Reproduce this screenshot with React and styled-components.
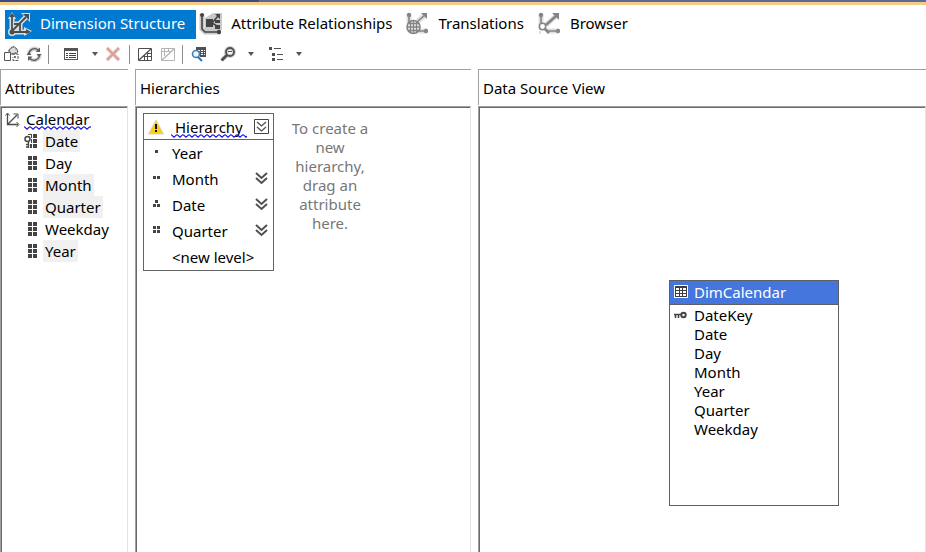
import React from "react";
import styled, { createGlobalStyle, css } from "styled-components";

const GlobalStyle = createGlobalStyle`
  *, *::before, *::after { box-sizing: border-box; }
  body {
    margin: 0;
    background: #fff;
    color: #000;
    font: 15px/20px "Noto Sans", "Open Sans", sans-serif;
  }
  button {
    margin: 0;
    padding: 0;
    border: 0;
    background: none;
    color: inherit;
    font: inherit;
  }
  ul { margin: 0; padding: 0; list-style: none; }
  svg { display: block; flex: none; }
`;

const Designer = styled.div`
  display: flex;
  flex-direction: column;
  min-height: 100vh;
`;

const TopEdge = styled.div`
  height: 5px;
  border-bottom: 3px solid #f5cc84;
  background: linear-gradient(to right, #3d4b85 28%, #5b6a98 28%);
`;

const Tabs = styled.nav`
  display: flex;
  padding: 5px 5px 3px;
`;

const Tab = styled.button`
  display: flex;
  align-items: center;
  gap: 8px;
  height: 29px;
  padding: 0 11px 3px 2px;
  color: ${(p) => (p.$active ? "#fff" : "#000")};
  background: ${(p) => (p.$active ? "#0079d0" : "transparent")};
`;

const Toolbar = styled.div`
  display: flex;
  align-items: center;
  height: 27px;
  padding: 0 1px 3px;
`;

const Tool = styled.button`
  display: flex;
  align-items: center;
  justify-content: center;
  width: ${(p) => p.$width}px;
  height: 22px;
`;

const Separator = styled.span`
  width: 1px;
  height: 19px;
  margin: 0 3px;
  background: #8c8c8c;
`;

const Panes = styled.main`
  flex: 1;
  display: grid;
  grid-template-columns: 128px 336px minmax(0, 1fr);
  gap: 7px;
`;

const Pane = styled.section`
  display: flex;
  flex-direction: column;
  gap: 1px;
  min-width: 0;
`;

const PaneTitle = styled.h2`
  margin: 0;
  height: 36px;
  padding: 8px 4px;
  border: solid #a0a0a0;
  border-width: 1px 0 0 1px;
  font-size: 15px;
  font-weight: 400;
`;

const PaneBody = styled.div`
  flex: 1;
  position: relative;
  display: flex;
  align-items: flex-start;
  border-top: 1px solid #a0a0a0;
  border-left: 1px solid #a0a0a0;
  border-right: 1px solid #e3e3e3;
  box-shadow: inset 1px 1px #696969;
`;

const Tree = styled.ul`
  padding: 1px 0 0 1px;
`;

const TreeRow = styled.li`
  display: flex;
  align-items: center;
  gap: ${(p) => (p.$root ? 3 : 3)}px;
  height: 22px;
  padding-left: ${(p) => (p.$root ? 3 : 22)}px;
`;

const Label = styled.span`
  position: relative;
  height: 22px;
  padding: 1px 2px 0;
  ${(p) => p.$used && css`background: #f0f0f0;`}
`;

const SquiggleSvg = styled.svg`
  position: absolute;
  left: 0;
  bottom: 0;
  width: 100%;
  height: 4px;
`;

const HierarchyBox = styled.article`
  width: 131px;
  margin: 6px 0 0 7px;
  border: 1px solid #646464;
`;

const HierarchyHead = styled.header`
  display: flex;
  align-items: center;
  gap: 7px;
  height: 26px;
  padding: 0 4px;
  border-bottom: 1px solid #646464;
`;

const HierarchyName = styled.span`
  position: relative;
  flex: 1;
  height: 22px;
  padding: 1px 3px 0 4px;
`;

const Level = styled.li`
  display: flex;
  align-items: center;
  height: 26px;
  padding: 0 4px 1px 8px;
`;

const LevelName = styled.span`
  flex: 1;
  padding-left: 11px;
`;

const Hint = styled.p`
  width: 84px;
  margin: 12px 0 0 14px;
  color: #777;
  line-height: 19px;
  text-align: center;
`;

const TableNode = styled.article`
  position: absolute;
  left: 190px;
  top: 173px;
  width: 170px;
  min-height: 226px;
  border: 1px solid #5f5f5f;
  background: #fff;
`;

const TableHead = styled.header`
  display: flex;
  align-items: center;
  gap: 5px;
  height: 24px;
  padding: 0 4px 1px 3px;
  border-bottom: 1px solid #5f5f5f;
  background: #4476dd;
  color: #fff;
`;

const Column = styled.li`
  display: flex;
  align-items: center;
  height: 19px;
  padding-left: 4px;
`;

const KeySlot = styled.span`
  width: 20px;
`;

function Squiggle({ id }) {
  return (
    <SquiggleSvg aria-hidden="true">
      <defs>
        <pattern id={id} width="6" height="4" patternUnits="userSpaceOnUse">
          <path d="M-1 -.5 L0 .5 L3 3.2 L6 .5 L7 -.5" fill="none" stroke="#1414e6" strokeWidth="1.1" />
        </pattern>
      </defs>
      <rect width="100%" height="4" fill={`url(#${id})`} />
    </SquiggleSvg>
  );
}

const tabPalettes = {
  structure: { ink: "#4c4c4c", halo: "#d9dde0" },
  relationships: { ink: "#444", halo: "#c9c9c9" },
  translations: { ink: "#858585", halo: "#dedede" },
  browser: { ink: "#858585", halo: "#dedede" },
};

function StructureShape({ ink, halo }) {
  const lines = "M5 5V17L5 21H20M6 19L19 6M7 13H13V20";
  return (
    <>
      <path d={lines} stroke={halo} strokeWidth="5" />
      <path d="M1 8L5 1L9 8ZM14 2H23V11ZM17 16L25 20L17 25Z" fill={halo} />
      <circle cx="5" cy="21" r="4" fill={halo} />
      <path d={lines} stroke={ink} strokeWidth="1.8" />
      <path d="M2 6L5 2L8 6ZM16 3H22V9ZM19 18L24 21L19 23Z" fill={ink} />
      <circle cx="5" cy="21" r="2.500" fill={ink} />
    </>
  );
}

function RelationshipsShape({ ink, halo }) {
  return (
    <>
      <path d="M4 3V18L7 21H22M8 12H22" stroke={halo} strokeWidth="5" />
      <path d="M7 7L15 2H24V19H7Z" fill={halo} />
      <path d="M4 4V18L7 21H21M14 12L20 5M14 12L19 15" stroke={ink} strokeWidth="1.600" />
      <path d="M8 8H15V16H8ZM17 9H22V12H17ZM17 14H22V18H17ZM17 3H22V8Z" fill={ink} />
      <circle cx="4" cy="4" r="2" fill={ink} />
      <circle cx="21" cy="21" r="2.200" fill={ink} />
    </>
  );
}

function TranslationsShape({ ink, halo }) {
  return (
    <>
      <path d="M4 3V12M13 10L20 4M14 20H22" stroke={halo} strokeWidth="5" />
      <path d="M4 4V11M12 11L20 4M14 20H21" stroke={ink} strokeWidth="1.600" />
      <path d="M16 2H22V8Z" fill={ink} />
      <circle cx="4" cy="4" r="2.200" fill={ink} />
      <circle cx="21" cy="20" r="2.200" fill={ink} />
      <circle cx="8.500" cy="16" r="6.500" fill="#ececec" stroke={ink} strokeWidth="1.600" />
      <path d="M2 16H15M3 12.500H14M3 19.500H14M8.500 9V23M5.500 10V22M11.500 10V22" stroke={ink} strokeWidth="1.300" />
    </>
  );
}

function BrowserShape({ ink, halo }) {
  return (
    <>
      <path d="M4 3V14M9 14L20 4M10 20H22" stroke={halo} strokeWidth="5" />
      <path d="M4 4V12M11 20H21" stroke={ink} strokeWidth="1.600" />
      <path d="M9 14L19 5" stroke={ink} strokeWidth="2.400" />
      <path d="M15 2H22V9Z" fill={ink} />
      <circle cx="4" cy="4" r="2.200" fill={ink} />
      <circle cx="21" cy="20" r="2.200" fill={ink} />
      <circle cx="5.500" cy="15.500" r="3.200" fill="#fff" stroke={ink} strokeWidth="1.600" />
      <path d="M8 18L12 22" stroke={ink} strokeWidth="2.600" />
      <path d="M3 20V23" stroke={halo} strokeWidth="2" />
    </>
  );
}

const tabShapes = {
  structure: StructureShape,
  relationships: RelationshipsShape,
  translations: TranslationsShape,
  browser: BrowserShape,
};

function TabIcon({ kind }) {
  const Shape = tabShapes[kind];
  return (
    <svg width="25" height="25" viewBox="0 0 25 25" fill="none" aria-hidden="true">
      <Shape {...tabPalettes[kind]} />
    </svg>
  );
}

const Icon16 = ({ children }) => (
  <svg width="16" height="16" viewBox="0 0 16 16" fill="none" aria-hidden="true">
    {children}
  </svg>
);

const ProcessIcon = () => (
  <Icon16>
    <path d="M.5 6.500H6.500V14.500H.5Z" fill="#fff" stroke="#555" />
    <path d="M4 5L9 1L14 5L9 8Z" fill="#ddd" stroke="#777" strokeDasharray="2 1" />
    <path d="M7 1.500L10 .5L13 3L14 6L11 8H7L5 4Z" stroke="#666" />
    <path d="M8 8H14V14.500H9V11" stroke="#555" strokeDasharray="3 1" />
    <path d="M10 10H12V12H10Z" fill="#777" />
  </Icon16>
);

const RefreshIcon = () => (
  <Icon16>
    <path d="M3 9A5.500 5.500 0 0 1 12 4M13.500 8A5.500 5.500 0 0 1 4 12.500" stroke="#d2d2d2" strokeWidth="4" />
    <path d="M3 8A5.500 5.500 0 0 1 12 4M13.500 8.500A5.500 5.500 0 0 1 4 12.500" stroke="#5c5c5c" strokeWidth="1.300" />
    <path d="M9.500 6H14V1.500ZM6.500 10.500H2V15ZM.5 9L3 6L5.500 9ZM10.500 8H15.500L13 11Z" fill="#5c5c5c" />
  </Icon16>
);

const ListIcon = () => (
  <Icon16>
    <g shapeRendering="crispEdges">
      <path d="M1.500 2.500H14.500V13.500H1.500Z" stroke="#555" />
      <path d="M1 2H15V5H1Z" fill="#555" />
      <path d="M3 7H5V8H3ZM6 7H13V8H6ZM3 9H5V10H3ZM6 9H13V10H6ZM3 11H5V12H3ZM6 11H13V12H6Z" fill="#444" />
    </g>
  </Icon16>
);

const DeleteIcon = () => (
  <Icon16>
    <path d="M2 2L14 14M14 2L2 14" stroke="#e3dad8" strokeWidth="4" />
    <path d="M2 2L14 14M14 2L2 14" stroke="#df9d94" strokeWidth="2.200" />
  </Icon16>
);

const GridIcon = ({ faded }) => {
  const ink = faded ? "#b4b4b4" : "#4f4f4f";
  return (
    <Icon16>
      <path d="M1.500 2.500H14.500V14.500H1.500Z" stroke={ink} />
      <path d="M2 14L14 3" stroke={ink} strokeWidth="1.300" />
      {faded ? (
        <path d="M4.500 3V10M2 5.500H11M8.500 3V6" stroke={ink} />
      ) : (
        <path d="M10.500 6V14M6 10.500H14M7.500 9V14M10 7.500H14" stroke={ink} />
      )}
    </Icon16>
  );
};

const FindTableIcon = () => (
  <Icon16>
    <path d="M5 1H15V11H9V6H5Z" fill="#505050" />
    <path d="M7 4.500H9M10 4.500H12M13 4.500H14M10 6.500H12M13 6.500H14M10 8.500H12M13 8.500H14" stroke="#fff" />
    <circle cx="5" cy="8" r="3.500" fill="#eef5fb" stroke="#3f7fb8" strokeWidth="1.600" />
    <path d="M7 11L11 15" stroke="#2f73b0" strokeWidth="2" />
  </Icon16>
);

const ZoomIcon = () => (
  <Icon16>
    <path d="M2 14L7 9" stroke="#d0d0d0" strokeWidth="4" />
    <circle cx="10" cy="6" r="4" fill="#fff" stroke="#d0d0d0" strokeWidth="4" />
    <path d="M1.500 14.500L7 9" stroke="#505050" strokeWidth="2.600" />
    <circle cx="10" cy="6" r="4" stroke="#505050" strokeWidth="1.800" />
    <path d="M8 5.500H12" stroke="#505050" />
  </Icon16>
);

const OutlineIcon = () => (
  <Icon16>
    <path
      d="M1 1H4V4H1ZM6 2H13V3H6ZM4 7H7V10H4ZM9 8H15V9H9ZM4 12H7V15H4ZM9 13H15V14H9Z"
      fill="#4f4f4f"
      shapeRendering="crispEdges"
    />
  </Icon16>
);

const Caret = () => (
  <svg width="6" height="4" viewBox="0 0 6 4" aria-hidden="true">
    <path d="M0 0H6L3 4Z" fill="#555" />
  </svg>
);

const DimensionIcon = () => (
  <Icon16>
    <path d="M2.500 3V13.500H13M3 13L12 4" stroke="#4a4a4a" strokeWidth="1.300" />
    <path d="M.5 4.500L2.500 2L4.500 4.500M8.500 3H13V7.500M11.500 11L14 13.500L11.500 16" stroke="#4a4a4a" />
  </Icon16>
);

const AttributeIcon = ({ keyed }) => (
  <svg width="16" height="14" viewBox="0 0 16 14" aria-hidden="true">
    <path
      d="M4 0H8V4H4ZM9 0H13V4H9ZM4 5H8V9H4ZM9 5H13V9H9ZM4 10H8V14H4ZM9 10H13V14H9Z"
      fill="#444"
      shapeRendering="crispEdges"
    />
    {keyed && (
      <g>
        <path d="M0 1H7V9H6V14H0Z" fill="#fff" />
        <circle cx="3.500" cy="5" r="2.500" fill="#fff" stroke="#444" strokeWidth="1.500" />
        <path d="M4.500 8V14M2 10.500H4M2 13H4" stroke="#444" strokeWidth="1.300" />
      </g>
    )}
  </svg>
);

const WarningIcon = () => (
  <svg width="16" height="16" viewBox="0 0 16 16" aria-hidden="true">
    <path d="M8 1L15.500 15H.5Z" fill="#ffcd12" stroke="#d9d3bd" strokeLinejoin="round" />
    <path d="M7 5H9V10H7ZM7 11H9V13H7Z" fill="#111" />
  </svg>
);

const Chevrons = ({ framed }) => (
  <svg width="15" height="15" viewBox="0 0 15 15" fill="none" aria-hidden="true">
    {framed && <path d="M.5 .5H14.500V14.500H.5Z" stroke="#444" />}
    <path
      d={framed ? "M3 3L7.500 7L12 3M3 8L7.500 12L12 8" : "M2 2L7.500 7L13 2M2 7L7.500 12L13 7"}
      stroke="#505050"
      strokeWidth={framed ? 1.3 : 2}
    />
  </svg>
);

const DOTS = {
  1: "M3 2H6V5H3Z",
  2: "M1 2H4V5H1ZM5 2H8V5H5Z",
  3: "M3 0H6V3H3ZM1 4H4V7H1ZM5 4H8V7H5Z",
  4: "M1 0H4V3H1ZM5 0H8V3H5ZM1 4H4V7H1ZM5 4H8V7H5Z",
};

const LevelDots = ({ count }) => (
  <svg width="9" height="9" viewBox="0 0 9 9" aria-hidden="true">
    {DOTS[count] && <path d={DOTS[count]} fill="#444" shapeRendering="crispEdges" />}
  </svg>
);

const TableIcon = () => (
  <Icon16>
    <g shapeRendering="crispEdges">
      <path d="M1 1H15V14H1Z" fill="#fff" />
      <path d="M2 2H14V13H2Z" fill="#3c3c3c" />
      <path
        d="M3 4H6V6H3ZM7 4H9V6H7ZM10 4H13V6H10ZM3 7H6V9H3ZM7 7H9V9H7ZM10 7H13V9H10ZM3 10H6V12H3ZM7 10H9V12H7ZM10 10H13V12H10Z"
        fill="#fff"
      />
    </g>
  </Icon16>
);

const KeyIcon = () => (
  <svg width="14" height="8" viewBox="0 0 14 8" fill="none" aria-hidden="true">
    <path d="M0 3.500H8M1.500 3V7M4.500 3V7" stroke="#444" strokeWidth="1.600" />
    <circle cx="9.500" cy="4" r="2.200" fill="#fff" stroke="#444" strokeWidth="2" />
    <path d="M7 1L8 2M12 1L11 2M7 7L8 6M12 7L11 6" stroke="#777" />
  </svg>
);

const tabs = [
  { kind: "structure", name: "Dimension Structure" },
  { kind: "relationships", name: "Attribute Relationships" },
  { kind: "translations", name: "Translations" },
  { kind: "browser", name: "Browser" },
];

const attributes = [
  { name: "Date", used: true, keyed: true },
  { name: "Day" },
  { name: "Month", used: true },
  { name: "Quarter", used: true },
  { name: "Weekday" },
  { name: "Year", used: true },
];

const levels = ["Year", "Month", "Date", "Quarter"];
const columns = ["DateKey", "Date", "Day", "Month", "Year", "Quarter", "Weekday"];

export default function App() {
  return (
    <Designer>
      <GlobalStyle />
      <TopEdge />
      <Tabs>
        {tabs.map((tab, i) => (
          <Tab key={tab.kind} $active={i === 0} aria-current={i === 0 ? "page" : undefined}>
            <TabIcon kind={tab.kind} />
            {tab.name}
          </Tab>
        ))}
      </Tabs>
      <Toolbar role="toolbar" aria-label="Dimension tools">
        <Tool $width={22} aria-label="Process"><ProcessIcon /></Tool>
        <Tool $width={22} aria-label="Refresh"><RefreshIcon /></Tool>
        <Separator />
        <Tool $width={38} aria-label="Attribute view"><ListIcon /></Tool>
        <Tool $width={10} aria-label="Attribute view options"><Caret /></Tool>
        <Tool $width={26} aria-label="Delete"><DeleteIcon /></Tool>
        <Separator />
        <Tool $width={24} aria-label="Show grid"><GridIcon /></Tool>
        <Tool $width={22} aria-label="Hide grid"><GridIcon faded /></Tool>
        <Separator />
        <Tool $width={26} aria-label="Find table"><FindTableIcon /></Tool>
        <Tool $width={32} aria-label="Zoom"><ZoomIcon /></Tool>
        <Tool $width={14} aria-label="Zoom options"><Caret /></Tool>
        <Tool $width={36} aria-label="Outline"><OutlineIcon /></Tool>
        <Tool $width={10} aria-label="Outline options"><Caret /></Tool>
      </Toolbar>
      <Panes>
        <Pane>
          <PaneTitle>Attributes</PaneTitle>
          <PaneBody>
            <Tree>
              <TreeRow $root>
                <DimensionIcon />
                <Label>
                  Calendar
                  <Squiggle id="squiggle-dimension" />
                </Label>
              </TreeRow>
              {attributes.map((a) => (
                <TreeRow key={a.name}>
                  <AttributeIcon keyed={a.keyed} />
                  <Label $used={a.used}>{a.name}</Label>
                </TreeRow>
              ))}
            </Tree>
          </PaneBody>
        </Pane>
        <Pane>
          <PaneTitle>Hierarchies</PaneTitle>
          <PaneBody>
            <HierarchyBox>
              <HierarchyHead>
                <WarningIcon />
                <HierarchyName>
                  Hierarchy
                  <Squiggle id="squiggle-hierarchy" />
                </HierarchyName>
                <button aria-label="Collapse hierarchy"><Chevrons framed /></button>
              </HierarchyHead>
              <ul>
                {levels.map((name, i) => (
                  <Level key={name}>
                    <LevelDots count={i + 1} />
                    <LevelName>{name}</LevelName>
                    {i > 0 && <button aria-label={`Expand ${name}`}><Chevrons /></button>}
                  </Level>
                ))}
                <Level>
                  <LevelDots count={0} />
                  <LevelName>&lt;new level&gt;</LevelName>
                </Level>
              </ul>
            </HierarchyBox>
            <Hint>To create a new hierarchy, drag an attribute here.</Hint>
          </PaneBody>
        </Pane>
        <Pane>
          <PaneTitle>Data Source View</PaneTitle>
          <PaneBody>
            <TableNode>
              <TableHead>
                <TableIcon />
                DimCalendar
              </TableHead>
              <ul>
                {columns.map((name, i) => (
                  <Column key={name}>
                    <KeySlot>{i === 0 && <KeyIcon />}</KeySlot>
                    {name}
                  </Column>
                ))}
              </ul>
            </TableNode>
          </PaneBody>
        </Pane>
      </Panes>
    </Designer>
  );
}
